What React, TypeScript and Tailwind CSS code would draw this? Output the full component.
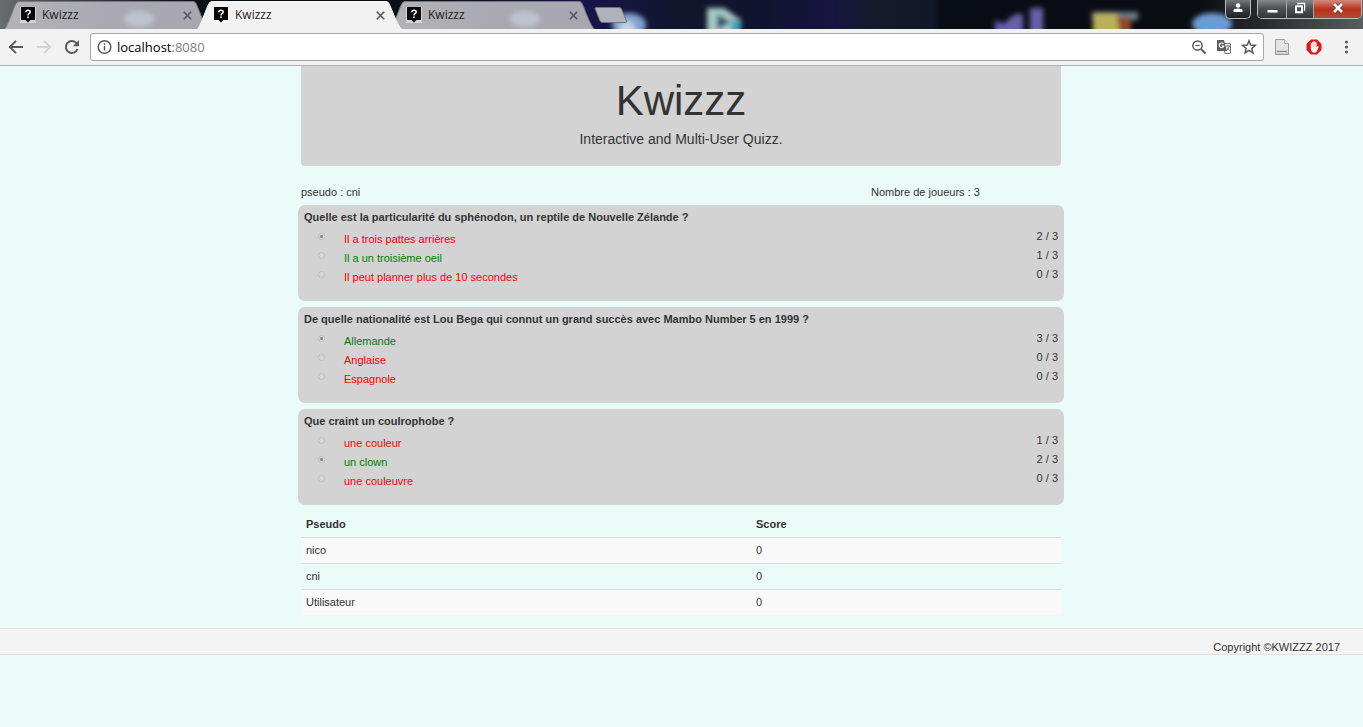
import React from "react";

type Answer = { text: string; correct?: boolean; chosen?: boolean; votes: number };
type Question = { title: string; answers: Answer[] };

const questions: Question[] = [
  {
    title: "Quelle est la particularité du sphénodon, un reptile de Nouvelle Zélande ?",
    answers: [
      { text: "Il a trois pattes arrières", chosen: true, votes: 2 },
      { text: "Il a un troisième oeil", correct: true, votes: 1 },
      { text: "Il peut planner plus de 10 secondes", votes: 0 },
    ],
  },
  {
    title: "De quelle nationalité est Lou Bega qui connut un grand succès avec Mambo Number 5 en 1999 ?",
    answers: [
      { text: "Allemande", correct: true, chosen: true, votes: 3 },
      { text: "Anglaise", votes: 0 },
      { text: "Espagnole", votes: 0 },
    ],
  },
  {
    title: "Que craint un coulrophobe ?",
    answers: [
      { text: "une couleur", votes: 1 },
      { text: "un clown", correct: true, chosen: true, votes: 2 },
      { text: "une couleuvre", votes: 0 },
    ],
  },
];

const scores = [
  { name: "nico", score: 0 },
  { name: "cni", score: 0 },
  { name: "Utilisateur", score: 0 },
];

const PLAYERS = 3;

function Desktop() {
  return (
    <svg className="absolute inset-0 h-full w-full" viewBox="0 0 1363 29" preserveAspectRatio="none" aria-hidden="true">
      <defs>
        <linearGradient id="desk" x1="0" x2="1" y1="0" y2="0">
          <stop offset="0" stopColor="#6b6e70" />
          <stop offset="0.03" stopColor="#4b4f53" />
          <stop offset="0.14" stopColor="#0b0f17" />
          <stop offset="0.3" stopColor="#0b0f17" />
          <stop offset="0.43" stopColor="#17144a" />
          <stop offset="0.5" stopColor="#12162c" />
          <stop offset="0.56" stopColor="#101430" />
          <stop offset="0.61" stopColor="#171440" />
          <stop offset="0.64" stopColor="#131a2b" />
          <stop offset="0.685" stopColor="#121829" />
          <stop offset="0.69" stopColor="#090d14" />
          <stop offset="0.88" stopColor="#0a0d12" />
          <stop offset="0.93" stopColor="#2a2d30" />
          <stop offset="1" stopColor="#5a5d5f" />
        </linearGradient>
        <filter id="soft" filterUnits="userSpaceOnUse" x="560" y="-10" width="720" height="60">
          <feGaussianBlur stdDeviation="2.600" />
        </filter>
      </defs>
      <rect width="1363" height="29" fill="url(#desk)" />
      <g filter="url(#soft)">
        <ellipse cx="629" cy="25" rx="17" ry="12" fill="#7ea2cf" />
        <ellipse cx="627" cy="29" rx="8" ry="8" fill="#c3d2e4" />
        <path d="M707 8h17l17 12v22h-34z" fill="#a9c9c4" />
        <path d="M717 14l14 8-14 8z" fill="#234f69" />
        <path d="M733 18l8 4v19h-12z" fill="#3d9cb8" />
        <path d="M995 20l8 4 12-10 8 0v28h-28zM1030 8h13v34h-13z" fill="#6660a8" />
        <path d="M1092 12h46v8h-46z" fill="#6a8090" />
        <path d="M1093 13h24l8 29h-32z" fill="#b9b05c" />
        <path d="M1117 17l14 0v24h-10z" fill="#8d4a25" />
        <ellipse cx="1212" cy="24" rx="20" ry="11" fill="#6d9cd2" />
      </g>
    </svg>
  );
}

function Favicon() {
  return (
    <svg className="h-4 w-4 shrink-0" viewBox="0 0 16 16" aria-hidden="true">
      <path d="M0 0h16v16H0z" fill="#fff" opacity="0.45" />
      <path d="M1 0h14v13H10.500L8 15.500 5.500 13H1z" fill="#0a0a0a" />
      <path d="M5.800 5.300Q5.900 3.200 8 3.200Q10.200 3.200 10.200 5Q10.200 6 9 6.700Q8 7.300 8 8.500" fill="none" stroke="#fff" strokeWidth="1.500" />
      <path d="M7.200 9.500h1.600v1.500H7.200z" fill="#fff" />
    </svg>
  );
}

function Tab({ active = false }: { active?: boolean }) {
  return (
    <div className={active ? "relative z-10 flex h-7 w-[193px] items-center" : "relative flex h-7 w-[193px] items-center"}>
      <svg className="absolute top-0 left-0 h-7 w-[206px]" viewBox="0 0 206 28" aria-hidden="true">
        <defs>
          <linearGradient id="tabfill" x1="0" x2="1" y1="0" y2="0">
            <stop offset="0" stopColor="#b3b3b6" />
            <stop offset="0.5" stopColor="#aaa9b2" />
            <stop offset="1" stopColor="#a8a6af" />
          </linearGradient>
          <filter id="tabsoft" x="-50%" y="-50%" width="200%" height="200%">
            <feGaussianBlur stdDeviation="2.500" />
          </filter>
        </defs>
        <path d="M0 28.500C3 27.500 10 5 12 2.500Q13 .5 15 .5H189Q191 .5 192 2.500C194 6 201 27 205 28.500z" fill={active ? "#f2f2f2" : "url(#tabfill)"} stroke={active ? "#f7f7f7" : "#77777c"} />
        {!active && <ellipse cx="135" cy="18" rx="15" ry="8" fill="#bdc3cf" filter="url(#tabsoft)" />}
      </svg>
      <button type="button" className="relative flex min-w-0 flex-1 items-center gap-[6px] pl-4 text-left text-[12px] leading-4 text-[#222]">
        <Favicon />
        Kwizzz
      </button>
      <button type="button" aria-label="Fermer l'onglet" className="relative mr-[2px] flex h-4 w-4 items-center justify-center">
        <svg className="h-[9px] w-[9px]" viewBox="0 0 9 9" fill="none" stroke="#55565a" strokeWidth="1.600">
          <path d="M.8 .8l7.400 7.400M8.200 .8L.8 8.200" />
        </svg>
      </button>
    </div>
  );
}

function WindowControls() {
  return (
    <div className="relative ml-auto flex h-[19px] items-stretch gap-[6px] pr-px">
      <button type="button" aria-label="Profil" className="flex w-[26px] items-center justify-center rounded-b-[5px] border border-t-0 border-[#b9bbbd] bg-linear-to-b from-[#74777a] via-[#3c3f42] to-[#202326] pb-[2px]">
        <svg className="h-[10px] w-[10px]" viewBox="0 0 10 10" fill="#fff">
          <circle cx="5" cy="2.500" r="2.200" />
          <path d="M.5 9V7Q1 5.500 5 5.500T9.500 7V9z" />
        </svg>
      </button>
      <div className="flex overflow-hidden rounded-b-[5px] border border-t-0 border-[#b9bbbd]">
        <button type="button" aria-label="Réduire" className="flex w-[29px] items-center justify-center border-r border-[#a5a7a9] bg-linear-to-b from-[#85888a] via-[#4b4e51] to-[#34373a]">
          <svg className="h-[13px] w-[13px]" viewBox="0 0 13 13">
            <path d="M1 6.500h11v3.500h-11z" fill="#fff" stroke="#4a4c58" />
          </svg>
        </button>
        <button type="button" aria-label="Niveau inférieur" className="flex w-[27px] items-center justify-center border-r border-[#a5a7a9] bg-linear-to-b from-[#85888a] via-[#4b4e51] to-[#34373a] pb-[2px]">
          <svg className="h-3 w-3" viewBox="0 0 12 12" fill="none">
            <path d="M4 3V1.500h6.500V8H9" stroke="#fff" strokeWidth="1.500" />
            <path d="M2 4.200h6v6H2z" stroke="#4a4c58" strokeWidth="3.600" />
            <path d="M2 4.200h6v6H2z" stroke="#fff" strokeWidth="2" />
          </svg>
        </button>
        <button type="button" aria-label="Fermer" className="flex w-[47px] items-center justify-center bg-linear-to-b from-[#d08a7c] via-[#b8301b] to-[#b04a30] pb-[2px]">
          <svg className="h-3 w-3" viewBox="0 0 12 12" fill="none">
            <path d="M2 2l8 8M10 2l-8 8" stroke="#5b3540" strokeWidth="4.400" />
            <path d="M2 2l8 8M10 2l-8 8" stroke="#fff" strokeWidth="2.800" />
          </svg>
        </button>
      </div>
    </div>
  );
}

function Toolbar() {
  return (
    <div className="flex h-[37px] items-center border-b border-[#b2b2b2] bg-[#f2f2f2] pr-[9px] pl-2">
      <button type="button" aria-label="Précédent" className="flex h-5 w-4 items-center">
        <svg className="h-4 w-4" viewBox="0 0 16 16" fill="none" stroke="#5a5a5a" strokeWidth="1.900">
          <path d="M15 8H2.500M8 1.800L1.800 8 8 14.200" />
        </svg>
      </button>
      <button type="button" aria-label="Suivant" className="ml-3 flex h-5 w-4 items-center">
        <svg className="h-4 w-4" viewBox="0 0 16 16" fill="none" stroke="#d4d4d4" strokeWidth="1.900">
          <path d="M1 8h12.500M8 1.800L14.200 8 8 14.200" />
        </svg>
      </button>
      <button type="button" aria-label="Actualiser" className="ml-3 flex h-5 w-4 items-center">
        <svg className="h-4 w-4" viewBox="0 0 16 16" fill="none">
          <path d="M13.500 10A6 6 0 1 1 12.500 4.200" stroke="#5a5a5a" strokeWidth="2" />
          <path d="M15 1v6.200H8.800z" fill="#5a5a5a" />
        </svg>
      </button>
      <div className="ml-[10px] flex h-7 min-w-0 flex-1 items-center rounded-[3px] border border-[#a6a6a6] bg-white px-[6px]">
        <svg className="h-4 w-4 shrink-0" viewBox="0 0 16 16" fill="none" stroke="#5a5a5a" strokeWidth="1.500" aria-hidden="true">
          <circle cx="7.500" cy="8" r="6.300" />
          <path d="M7.500 7v4.500M7.500 4.200v1.600" />
        </svg>
        <p className="ml-1 flex-1 text-[13px] leading-5 text-black">
          localhost<span className="text-[#808080]">:8080</span>
        </p>
        <div className="flex items-center gap-[9px]">
          <svg className="h-4 w-4" viewBox="0 0 16 16" fill="none" stroke="#5a5a5a" aria-hidden="true">
            <circle cx="6.500" cy="6.500" r="4.600" strokeWidth="1.500" />
            <path d="M10 10l4.500 4.500" strokeWidth="2" />
            <path d="M4.300 6.500h4.400" strokeWidth="1.200" />
          </svg>
          <svg className="h-4 w-4" viewBox="0 0 16 16" aria-hidden="true">
            <path d="M7 4.500h7.500v10H9z" fill="#fff" stroke="#777" />
            <path d="M1 1h7l3 11H1z" fill="#5f5f5f" />
            <path d="M7.500 5A2.300 2.300 0 1 0 7.800 7H5.800" fill="none" stroke="#fff" strokeWidth="1.200" />
            <path d="M10 7h4M12 6v1M13.300 7Q12.500 10 10.800 11.500M11 8.500l2.500 3" fill="none" stroke="#777" />
          </svg>
          <svg className="h-4 w-4" viewBox="0 0 16 16" fill="none" stroke="#5a5a5a" strokeWidth="1.500" aria-hidden="true">
            <path d="M8 1.800l1.700 4.300 4.600.3-3.500 3 1.100 4.500L8 11.400l-3.900 2.500 1.100-4.500-3.500-3 4.600-.3z" />
          </svg>
        </div>
      </div>
      <div className="flex items-center pl-[10px]">
        <svg className="h-4 w-4" viewBox="0 0 16 16" aria-hidden="true">
          <path d="M1.500 .5h9l4 4v11h-13z" fill="#e4e4e4" stroke="#999" />
          <path d="M10.500 .5v4h4" fill="#f6f6f6" stroke="#aaa" />
          <path d="M2 11h12v4H2z" fill="#d2d2d2" />
          <path d="M3 12.500h10" stroke="#8a8a8a" />
        </svg>
        <svg className="ml-4 h-4 w-4" viewBox="0 0 16 16" aria-hidden="true">
          <path d="M5 .5h6l4.500 4.500v6L11 15.500H5L.5 11V5z" fill="#e8141c" />
          <path d="M4.800 9V4.500q.7-.8 1.400 0V3q.8-.8 1.500 0V2.300q.8-.7 1.500 0V3.500q.8-.7 1.500 0V8.500l1-1.200q1-.3 1 .5L10.800 12.500Q9.500 14 7.500 13.500Q5 13 4.800 9z" fill="#fff" />
          <path d="M6.200 4.500V8M7.700 3v5M9.200 3v5" stroke="#f0a0a0" strokeWidth=".5" />
        </svg>
        <button type="button" aria-label="Menu" className="ml-4 flex h-5 w-4 items-center justify-center">
          <svg className="h-4 w-4" viewBox="0 0 16 16" fill="#5a5a5a">
            <circle cx="8.500" cy="3" r="1.600" />
            <circle cx="8.500" cy="8" r="1.600" />
            <circle cx="8.500" cy="13" r="1.600" />
          </svg>
        </button>
      </div>
    </div>
  );
}

function QuestionCard({ question, index }: { question: Question; index: number }) {
  return (
    <section className="rounded-[7px] bg-[#d3d3d3] px-[6px] pt-1 pb-[17px]">
      <h2 className="mb-[2px] leading-4 font-bold">{question.title}</h2>
      <ul>
        {question.answers.map((answer, i) => {
          const id = `q${index}-a${i}`;
          return (
            <li key={id} className="flex items-start">
              <input
                id={id}
                type="radio"
                name={`q${index}`}
                defaultChecked={answer.chosen}
                disabled
                className="mt-[6px] ml-[14px] h-[7px] w-[7px] appearance-none rounded-full border border-[#bdbdbd] bg-[#d9d9d9] checked:bg-[radial-gradient(circle,#888_0_1px,#d9d9d9_2px)]"
              />
              <label htmlFor={id} className={answer.correct ? "ml-[19px] flex-1 pt-[5px] leading-[14px] text-[#008000]" : "ml-[19px] flex-1 pt-[5px] leading-[14px] text-[#ff0000]"}>
                {answer.text}
              </label>
              <span className="leading-[19px]">{`${answer.votes} / ${PLAYERS}`}</span>
            </li>
          );
        })}
      </ul>
    </section>
  );
}

export default function App() {
  return (
    <div className="flex min-h-screen flex-col bg-[#ebfbf8] font-['Liberation_Sans',Arial,sans-serif] text-[11px] text-[#333]">
      <header className="font-['Open_Sans','Noto_Sans',sans-serif]">
        <div className="relative flex h-[29px] items-start overflow-hidden bg-[#0a0d14] pl-1">
          <Desktop />
          <div className="relative flex pt-px">
            <Tab />
            <Tab active />
            <Tab />
          </div>
          <button type="button" aria-label="Nouvel onglet" className="relative mt-[7px] ml-[11px]">
            <svg className="h-4 w-[34px]" viewBox="0 0 34 16">
              <path d="M1 1.500Q1 .5 2.500 .5H25Q27 .5 27.500 2L32.500 14Q33 15.500 31 15.500H9Q7 15.500 6 14z" fill="#b0b1ba" stroke="#73737e" />
            </svg>
          </button>
          <WindowControls />
        </div>
        <Toolbar />
      </header>

      <main className="mx-auto w-full max-w-[761px] pr-px">
        <div className="rounded-b-[4px] bg-[#d3d3d3] pt-3 pb-[17px] text-center">
          <h1 className="text-[42px] leading-[46px]">Kwizzz</h1>
          <p className="mt-[5px] text-[14px] leading-5">Interactive and Multi-User Quizz.</p>
        </div>

        <div className="mt-[18px] grid grid-cols-4 leading-4">
          <p className="col-span-3">pseudo : cni</p>
          <p>Nombre de joueurs : 3</p>
        </div>

        <div className="-mx-[3px] mt-[5px] flex flex-col gap-[6px]">
          {questions.map((question, i) => (
            <QuestionCard key={question.title} question={question} index={i} />
          ))}
        </div>

        <table className="mt-[6px] w-full text-left leading-[15px]">
          <thead>
            <tr>
              <th className="w-[450px] px-[5px] pt-[6px] pb-[5px] font-bold">Pseudo</th>
              <th className="px-[5px] pt-[6px] pb-[5px] font-bold">Score</th>
            </tr>
          </thead>
          <tbody>
            {scores.map((row) => (
              <tr key={row.name} className="border-t border-[#ddd] odd:bg-[#f9f9f9]">
                <td className="p-[5px]">{row.name}</td>
                <td className="p-[5px]">{row.score}</td>
              </tr>
            ))}
          </tbody>
        </table>
      </main>

      <footer className="mt-[13px] border-y border-[#e1e1e1] bg-[#f4f4f4] pt-[11px] pr-[23px] text-right leading-[14px]">
        Copyright ©KWIZZZ 2017
      </footer>
    </div>
  );
}
